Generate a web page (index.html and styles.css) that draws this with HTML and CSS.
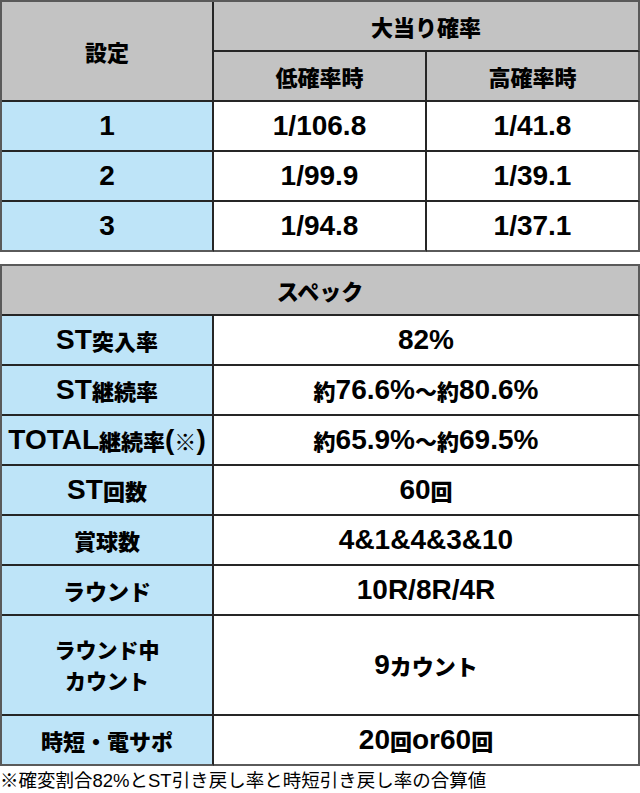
FILE: index.html
```html
<!DOCTYPE html>
<html lang="ja">
<head>
<meta charset="utf-8">
<title>スペック</title>
<link rel="stylesheet" href="styles.css">
</head>
<body>
<div class="page">
  <div class="grid prob">
    <div class="cell head span-rows">設定</div>
    <div class="cell head span-cols">大当り確率</div>
    <div class="cell head">低確率時</div>
    <div class="cell head end">高確率時</div>

    <div class="cell key l">1</div>
    <div class="cell val l">1/106.8</div>
    <div class="cell val l end">1/41.8</div>

    <div class="cell key l">2</div>
    <div class="cell val l">1/99.9</div>
    <div class="cell val l end">1/39.1</div>

    <div class="cell key l last">3</div>
    <div class="cell val l last">1/94.8</div>
    <div class="cell val l end last">1/37.1</div>
  </div>

  <div class="grid spec">
    <div class="cell head span-all end">スペック</div>

    <div class="cell key"><span class="l">ST</span>突入率</div>
    <div class="cell val end"><span class="l">82%</span></div>

    <div class="cell key"><span class="l">ST</span>継続率</div>
    <div class="cell val end">約<span class="l">76.6%</span>～約<span class="l">80.6%</span></div>

    <div class="cell key"><span class="l">TOTAL</span>継続率<span class="l">(</span>※<span class="l">)</span></div>
    <div class="cell val end">約<span class="l">65.9%</span>～約<span class="l">69.5%</span></div>

    <div class="cell key"><span class="l">ST</span>回数</div>
    <div class="cell val end"><span class="l">60</span>回</div>

    <div class="cell key">賞球数</div>
    <div class="cell val end"><span class="l">4&amp;1&amp;4&amp;3&amp;10</span></div>

    <div class="cell key">ラウンド</div>
    <div class="cell val end"><span class="l">10R/8R/4R</span></div>

    <div class="cell key tall">
      <div class="lines">
        <span class="line">ラウンド中</span>
        <span class="line">カウント</span>
      </div>
    </div>
    <div class="cell val end tall"><span class="l">9</span>カウント</div>

    <div class="cell key last">時短・電サポ</div>
    <div class="cell val end last"><span class="l">20</span>回<span class="l">or60</span>回</div>
  </div>

  <p class="note">※確変割合82%とST引き戻し率と時短引き戻し率の合算値</p>
</div>
</body>
</html>
```

FILE: styles.css
```css
html, body {
  margin: 0;
  padding: 0;
  background: #ffffff;
}

.page {
  width: 640px;
  font-family: "Noto Sans CJK JP", "Liberation Sans", sans-serif;
  color: #000000;
}

.grid {
  display: grid;
  box-sizing: border-box;
  width: 640px;
  border-top: 2px solid #5a5a5a;
  border-left: 2px solid #5a5a5a;
}

.prob {
  grid-template-columns: 212px 213px 213px;
  grid-template-rows: repeat(5, 50px);
}

.spec {
  margin-top: 12px;
  grid-template-columns: 212px 426px;
  grid-template-rows: repeat(7, 50px) 100px 50px;
}

.cell {
  box-sizing: border-box;
  display: flex;
  align-items: center;
  justify-content: center;
  text-align: center;
  border-right: 2px solid #262626;
  border-bottom: 2px solid #262626;
  font-size: 22px;
  font-weight: 900;
  line-height: 28px;
}

.cell.end {
  border-right-color: #5a5a5a;
}

.cell.last {
  border-bottom-color: #5a5a5a;
}

.head {
  background: #c3c3c3;
}

.key {
  background: #bee4f8;
}

.val {
  background: #ffffff;
}

.span-rows {
  grid-row: span 2;
}

.span-cols {
  grid-column: span 2;
  border-right-color: #5a5a5a;
}

.span-all {
  grid-column: 1 / -1;
}

.l {
  font-family: "Liberation Sans", "Noto Sans CJK JP", sans-serif;
  font-size: 28px;
  font-weight: 700;
}

.lines {
  display: flex;
  flex-direction: column;
  align-items: center;
  gap: 0;
}

.line {
  display: block;
  font-size: 21px;
  line-height: 31px;
}

.note {
  margin: 3px 0 0 0;
  font-family: "Liberation Sans", "Noto Sans CJK JP", sans-serif;
  font-size: 18.5px;
  font-weight: 400;
  line-height: 24px;
  white-space: nowrap;
}
```
